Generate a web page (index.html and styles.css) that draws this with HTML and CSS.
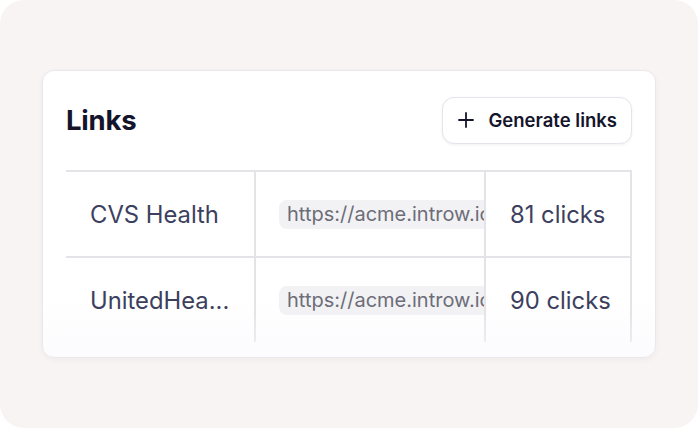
FILE: index.html
```html
<!DOCTYPE html>
<html lang="en">
<head>
    <meta charset="UTF-8">
    <title>Links</title>
    <link rel="stylesheet" href="styles.css">
</head>
<body>
    <div class="frame">
        <div class="card">
            <div class="card-header">
                <h1>Links</h1>
                <button class="btn">
                    <svg width="16" height="16" viewBox="0 0 16 16" fill="none">
                        <path d="M8 1v14M1 8h14" stroke="#14142b" stroke-width="1.8" stroke-linecap="round"/>
                    </svg>
                    Generate links
                </button>
            </div>

            <div class="table">
                <div class="row">
                    <div class="cell name">CVS Health</div>
                    <div class="cell url"><span class="chip">https://acme.introw.io/l/cvs-health</span></div>
                    <div class="cell clicks">81 clicks</div>
                </div>
                <div class="row">
                    <div class="cell name">UnitedHea...</div>
                    <div class="cell url"><span class="chip">https://acme.introw.io/l/unitedhealth</span></div>
                    <div class="cell clicks">90 clicks</div>
                </div>
            </div>
        </div>
    </div>
</body>
</html>
```

FILE: styles.css
```css
/* Reset */
* {
    margin: 0;
    padding: 0;
    box-sizing: border-box;
}

body {
    font-family: 'Inter', 'Noto Sans', sans-serif;
    background-color: #fff;
    width: 698px;
    height: 428px;
    overflow: hidden;
}

.frame {
    width: 698px;
    height: 428px;
    background-color: #f8f4f3;
    border-radius: 24px;
    padding: 70px 42px;
}

/* Card */
.card {
    background: linear-gradient(#fff 80%, #fcfbfd);
    border: 1px solid #ebe8ec;
    border-radius: 12px;
    box-shadow: 0 2px 6px rgba(40, 30, 60, 0.04);
    height: 288px;
    padding: 25px 23px 15px;
}

.card-header {
    display: flex;
    justify-content: space-between;
    align-items: center;
    height: 48px;
    margin-bottom: 26px;
}

h1 {
    font-size: 27.5px;
    font-weight: 700;
    color: #14142b;
    letter-spacing: -0.2px;
}

.btn {
    display: flex;
    align-items: center;
    gap: 15px;
    height: 47px;
    padding: 0 14px 0 15px;
    background-color: #fff;
    border: 1px solid #e5e4ea;
    border-radius: 12px;
    box-shadow: 0 1px 3px rgba(20, 20, 43, 0.06);
    font-family: inherit;
    font-size: 18.5px;
    font-weight: 600;
    color: #14142b;
}

/* Table */
.table {
    position: relative;
    border-top: 2px solid #e3e3e8;
    height: 172px;
    overflow: hidden;
}

.table::after {
    content: "";
    position: absolute;
    left: 0;
    right: 0;
    bottom: 0;
    height: 30px;
    background: linear-gradient(rgba(253, 252, 254, 0), rgba(252, 251, 253, 0.4));
}

.row {
    display: grid;
    grid-template-columns: 190px 230px 146px;
    height: 86px;
    border-bottom: 2px solid #e3e3e8;
}

.cell {
    display: flex;
    align-items: center;
    padding-left: 24px;
    border-right: 2px solid #e3e3e8;
    overflow: hidden;
    white-space: nowrap;
    font-size: 23.8px;
    color: #3d3f5e;
}

.chip {
    display: inline-block;
    background-color: #f2f2f5;
    border-radius: 8px;
    height: 29px;
    line-height: 29px;
    padding: 0 8px;
    font-size: 20px;
    color: #6d6d78;
}

.url {
    padding-left: 23px;
}
```
